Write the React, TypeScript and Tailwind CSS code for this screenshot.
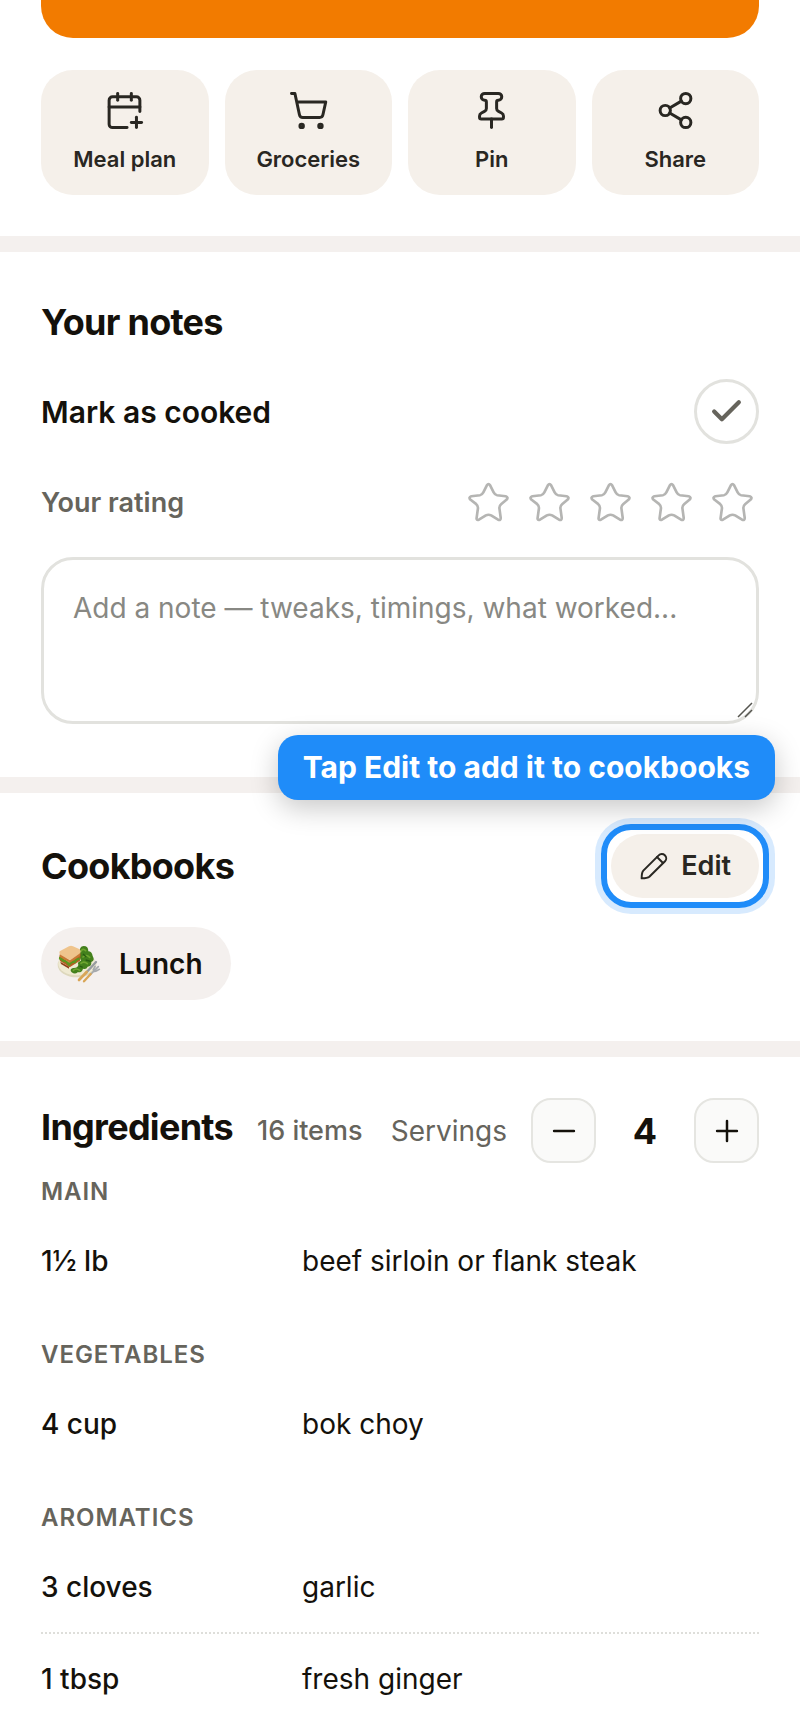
import { useState } from "react";
import type { ReactNode } from "react";
import {
  CalendarPlus,
  Check,
  Minus,
  Pin,
  Plus,
  Share2,
  ShoppingCart,
} from "lucide-react";

const actions = [
  { label: "Meal plan", Icon: CalendarPlus },
  { label: "Groceries", Icon: ShoppingCart },
  { label: "Pin", Icon: Pin },
  { label: "Share", Icon: Share2 },
];

const groups = [
  {
    title: "Main",
    items: [{ amount: "1½ lb", name: "beef sirloin or flank steak" }],
  },
  { title: "Vegetables", items: [{ amount: "4 cup", name: "bok choy" }] },
  {
    title: "Aromatics",
    items: [
      { amount: "3 cloves", name: "garlic" },
      { amount: "1 tbsp", name: "fresh ginger" },
    ],
  },
];

const Divider = () => <div className="h-4 bg-[#f4f0ee]" />;

const Heading = ({ children }: { children: ReactNode }) => (
  <h2 className="text-[36px] leading-[44px] font-bold tracking-[-0.02em]">
    {children}
  </h2>
);

const StarIcon = () => (
  <svg className="w-[43px] h-[43px]" viewBox="200 362 130 130" fill="none">
    <path
      d="M260 375Q265 368 270 375L281 397Q284 404 291 405L317 408Q326 411 320 418L303 432Q297 437 298 445L302 474Q302 482 294 479L273 466Q265 462 257 466L236 479Q228 482 229 474L233 445Q234 437 228 432L210 418Q204 411 213 408L239 405Q246 404 249 397Z"
      stroke="#b5b5b3"
      strokeWidth="8"
      strokeLinejoin="round"
    />
  </svg>
);

const PencilIcon = () => (
  <svg
    className="w-[30px] h-[30px]"
    viewBox="0 0 90 90"
    fill="none"
    stroke="currentColor"
    strokeWidth="6"
    strokeLinecap="round"
    strokeLinejoin="round"
  >
    <path d="M59 13A13 13 0 0 1 78 31L31 77Q26 81 8 82Q8 64 13 59Z" />
    <path d="M54 18L72 36" />
  </svg>
);

const LunchIcon = () => (
  <svg className="w-11 h-11" viewBox="0 0 132 132" aria-hidden="true">
    <ellipse cx="60" cy="69" rx="58" ry="37" fill="#ded8bd" />
    <ellipse cx="60" cy="66" rx="56" ry="34" fill="#efead2" />
    <path
      d="M68 34Q66 13 80 12Q94 12 94 28Q105 28 107 42Q115 56 103 60Q104 74 92 74Q88 84 78 80Q76 92 62 91Q54 98 44 91Q36 82 48 78Q62 79 64 69Q60 59 72 56Q66 46 68 34Z"
      fill="#43801c"
    />
    <path
      d="M72 28Q77 17 86 26M78 45Q88 36 98 46M72 64Q80 56 91 65M49 85Q57 77 68 85"
      stroke="#6ea52f"
      strokeWidth="5"
      fill="none"
      strokeLinecap="round"
    />
    <path
      d="M78 36L88 45M86 54L101 58M68 72L77 76"
      stroke="#285c12"
      strokeWidth="4"
    />
    <path d="M7 40L36 62L71 34L69 56L38 76L9 57Z" fill="#b75f23" />
    <path
      d="M6 48Q14 49 18 56Q28 56 36 68Q44 57 53 60Q57 51 68 50"
      stroke="#5b971f"
      strokeWidth="7"
      fill="none"
    />
    <path d="M10 59L36 74L36 80L12 66Z" fill="#8f3e18" />
    <path
      d="M8 28L36 13Q42 10 48 13L68 22Q73 26 70 34L40 54L10 40Q5 34 8 28Z"
      fill="#efc48c"
    />
    <path d="M8 37L39 55L69 34V42L39 62L9 45Z" fill="#c87933" />
    <path
      d="M117 60L84 96"
      stroke="#969ba0"
      strokeWidth="7"
      strokeLinecap="round"
    />
    <path
      d="M89 90L66 114"
      stroke="#d9a657"
      strokeWidth="8"
      strokeLinecap="round"
    />
    <path
      d="M124 74L100 98M114 73L109 83Q110 90 118 87L127 82"
      stroke="#a5a9ad"
      strokeWidth="5"
      fill="none"
      strokeLinecap="round"
    />
    <path
      d="M101 96L81 118"
      stroke="#d9a657"
      strokeWidth="7"
      strokeLinecap="round"
    />
  </svg>
);

const Notes = () => {
  const [cooked, setCooked] = useState(false);
  const [note, setNote] = useState("");

  return (
    <section className="px-[41px] pt-12 pb-[53px]">
      <Heading>Your notes</Heading>
      <div className="mt-[35px] flex items-center justify-between">
        <span className="text-[30px] leading-10 font-semibold">
          Mark as cooked
        </span>
        <button
          className="flex size-[65px] items-center justify-center rounded-full border-3 border-[#e2e2de] text-[#66645c]"
          aria-label="Mark as cooked"
          aria-pressed={cooked}
          onClick={() => setCooked(!cooked)}
        >
          <Check size={37} strokeWidth={2.75} />
        </button>
      </div>
      <div className="mt-8 flex items-center justify-between">
        <span className="text-[27px] leading-9 font-semibold text-[#66645c]">
          Your rating
        </span>
        <div className="flex gap-2">
          {[1, 2, 3, 4, 5].map((n) => (
            <button
              key={n}
              className="flex size-[53px] items-center justify-center"
              aria-label={`Rate ${n} of 5`}
            >
              <StarIcon />
            </button>
          ))}
        </div>
      </div>
      <div className="relative mt-7">
        <textarea
          className="block h-[167px] w-full resize-none rounded-[32px] border-3 border-[#e2e2de] px-[29px] py-7 text-[28px] leading-10 placeholder:text-[#888883]"
          aria-label="Note"
          placeholder="Add a note — tweaks, timings, what worked..."
          value={note}
          onChange={(e) => setNote(e.target.value)}
        />
        <svg
          className="absolute right-1.5 bottom-1.5 size-4"
          viewBox="0 0 16 16"
          stroke="#55554f"
          strokeWidth="1.5"
        >
          <path d="M1 15L15 1M8 15L15 8" />
        </svg>
      </div>
    </section>
  );
};

const Cookbooks = () => {
  return (
    <section className="px-[41px] py-[41px]">
      <div className="flex items-center justify-between">
        <Heading>Cookbooks</Heading>
        <div className="relative">
          <button className="flex h-16 items-center gap-3 rounded-full bg-[#f5f0ea] px-7 text-[27px] font-semibold text-[#292722]">
            <PencilIcon />
            Edit
          </button>
          <div className="pointer-events-none absolute -inset-2.5 rounded-[30px] border-6 border-[#1f8cf9] ring-6 ring-[#1f8cf9]/18" />
          <div
            role="tooltip"
            className="absolute -right-4 bottom-[98px] flex h-[65px] items-center rounded-[20px] bg-[#1f8cf9] px-[25px] text-[30px] font-bold whitespace-nowrap text-white shadow-[0_8px_28px_rgba(0,0,0,0.22)]"
          >
            Tap Edit to add it to cookbooks
          </div>
        </div>
      </div>
      <a
        className="mt-[29px] inline-flex h-[73px] items-center gap-[18px] rounded-full bg-[#f4f0ee] pr-7 pl-4 align-top text-[28px] font-semibold"
        href="#lunch"
      >
        <LunchIcon />
        Lunch
      </a>
    </section>
  );
};

const Ingredients = () => {
  const [servings, setServings] = useState(4);

  return (
    <section className="px-[41px] pt-[41px] pb-2">
      <div className="flex items-center justify-between">
        <div className="flex items-baseline gap-6 pb-2">
          <Heading>Ingredients</Heading>
          <span className="text-[27px] leading-9 font-medium text-[#66645c]">
            16 items
          </span>
        </div>
        <div className="flex items-center">
          <span className="mr-6 text-[28px] leading-10 text-[#66645c]">
            Servings
          </span>
          <button
            className="flex size-[65px] items-center justify-center rounded-[20px] border-2 border-[#e5e5e1] bg-[#fafaf9]"
            aria-label="Fewer servings"
            onClick={() => setServings(Math.max(1, servings - 1))}
          >
            <Minus size={34} strokeWidth={1.75} />
          </button>
          <output className="w-[98px] text-center text-[36px] leading-[44px] font-bold">
            {servings}
          </output>
          <button
            className="flex size-[65px] items-center justify-center rounded-[20px] border-2 border-[#e5e5e1] bg-[#fafaf9]"
            aria-label="More servings"
            onClick={() => setServings(servings + 1)}
          >
            <Plus size={34} strokeWidth={1.75} />
          </button>
        </div>
      </div>
      {groups.map((group) => (
        <div key={group.title} className="pt-[34px] nth-2:pt-[13px]">
          <h3 className="mb-2 text-[24px] leading-8 font-semibold tracking-[0.04em] text-[#66645c] uppercase">
            {group.title}
          </h3>
          <ul className="-mb-px divide-y-2 divide-dotted divide-[#dededa]">
            {group.items.map((item) => (
              <li
                key={item.name}
                className="grid grid-cols-[245px_1fr] gap-4 py-[25px] text-[28px] leading-10"
              >
                <span className="font-medium">{item.amount}</span>
                <span>{item.name}</span>
              </li>
            ))}
          </ul>
        </div>
      ))}
    </section>
  );
};

const App = () => {
  return (
    <main className="bg-white font-['Inter',sans-serif] text-[#14110b]">
      <section className="px-[41px] pb-[41px]">
        <div className="h-[38px] rounded-b-[32px] bg-[#f27b00]" />
        <div className="mt-8 grid grid-cols-4 gap-4">
          {actions.map(({ label, Icon }) => (
            <button
              key={label}
              className="flex flex-col items-center gap-3.5 rounded-[32px] bg-[#f5f0ea] pt-5 pb-[22px] text-[22px] leading-7 font-semibold text-[#292722]"
            >
              <Icon size={41} strokeWidth={1.75} />
              {label}
            </button>
          ))}
        </div>
      </section>
      <Divider />
      <Notes />
      <Divider />
      <Cookbooks />
      <Divider />
      <Ingredients />
    </main>
  );
};

export default App;
